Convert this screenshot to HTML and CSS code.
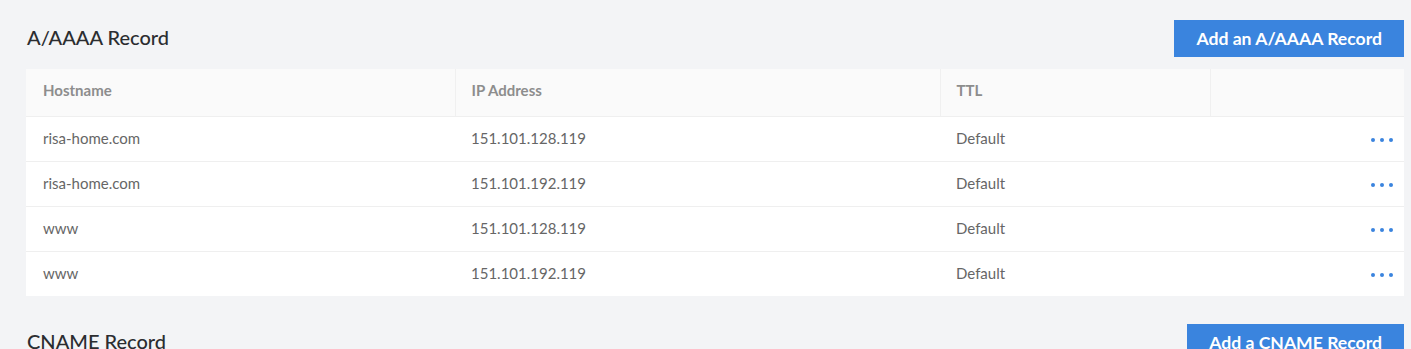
FILE: index.html
```html
<!DOCTYPE html>
<html lang="en">
<head>
    <meta charset="UTF-8">
    <meta name="viewport" content="width=device-width, initial-scale=1.0">
    <title>DNS Records</title>
    <link rel="stylesheet" href="styles.css">
</head>
<body>
    <div class="page">
        <!-- A/AAAA 记录 -->
        <section class="record">
            <div class="record-head">
                <h2 class="record-title">A/AAAA Record</h2>
                <button class="btn-add">Add an A/AAAA Record</button>
            </div>
            <table class="record-table">
                <colgroup>
                    <col class="col-host">
                    <col class="col-ip">
                    <col class="col-ttl">
                    <col class="col-act">
                </colgroup>
                <thead>
                    <tr>
                        <th>Hostname</th>
                        <th>IP Address</th>
                        <th>TTL</th>
                        <th></th>
                    </tr>
                </thead>
                <tbody>
                    <tr>
                        <td>risa-home.com</td>
                        <td>151.101.128.119</td>
                        <td>Default</td>
                        <td class="act"><span class="dots"><i></i><i></i><i></i></span></td>
                    </tr>
                    <tr>
                        <td>risa-home.com</td>
                        <td>151.101.192.119</td>
                        <td>Default</td>
                        <td class="act"><span class="dots"><i></i><i></i><i></i></span></td>
                    </tr>
                    <tr>
                        <td>www</td>
                        <td>151.101.128.119</td>
                        <td>Default</td>
                        <td class="act"><span class="dots"><i></i><i></i><i></i></span></td>
                    </tr>
                    <tr>
                        <td>www</td>
                        <td>151.101.192.119</td>
                        <td>Default</td>
                        <td class="act"><span class="dots"><i></i><i></i><i></i></span></td>
                    </tr>
                </tbody>
            </table>
        </section>

        <!-- CNAME 记录 -->
        <section class="record">
            <div class="record-head">
                <h2 class="record-title">CNAME Record</h2>
                <button class="btn-add">Add a CNAME Record</button>
            </div>
        </section>
    </div>
</body>
</html>
```

FILE: styles.css
```css
*{
    margin: 0;
    padding: 0;
    box-sizing: border-box;
}
body{
    background-color: #f3f4f6;
    font-family: Lato, "Liberation Sans", sans-serif;
    overflow: hidden;
}
.page{
    padding: 20px 7px 0 26px;
}
.record{
    margin-bottom: 28px;
}
.record-head{
    display: flex;
    justify-content: space-between;
    align-items: center;
    margin-bottom: 12px;
}
.record-title{
    font-size: 20px;
    font-weight: 500;
    color: #2b2d30;
    padding-left: 1px;
    margin-bottom: 3px;
}
.btn-add{
    height: 37px;
    padding: 0 22px;
    border: none;
    background-color: #3a84de;
    color: #fff;
    font-family: inherit;
    font-size: 17.6px;
    font-weight: 700;
}
.record-table{
    width: 100%;
    table-layout: fixed;
    border-collapse: collapse;
    background-color: #fff;
}
.col-host{ width: 429px; }
.col-ip{ width: 485px; }
.col-ttl{ width: 270px; }
.record-table th{
    height: 47px;
    padding: 0 16px 4px;
    text-align: left;
    font-size: 15px;
    font-weight: 700;
    color: #8d8d8d;
    background-color: #fafafa;
    border-left: 1px solid #f0f0f0;
    border-bottom: 1px solid #efefef;
}
.record-table th:first-child{
    border-left: none;
    padding-left: 17px;
}
.record-table td{
    height: 45px;
    padding: 0 16px 2px;
    font-size: 15px;
    color: #666;
    border-bottom: 1px solid #efefef;
}
.record-table td:first-child{
    padding-left: 17px;
}
.record-table tr:last-child td{
    border-bottom: none;
}
.record-table td.act{
    text-align: right;
    padding-right: 11px;
}
.dots{
    display: inline-flex;
    gap: 5px;
    vertical-align: middle;
}
.dots i{
    width: 4px;
    height: 4px;
    border-radius: 50%;
    background-color: #3a84de;
}
```
